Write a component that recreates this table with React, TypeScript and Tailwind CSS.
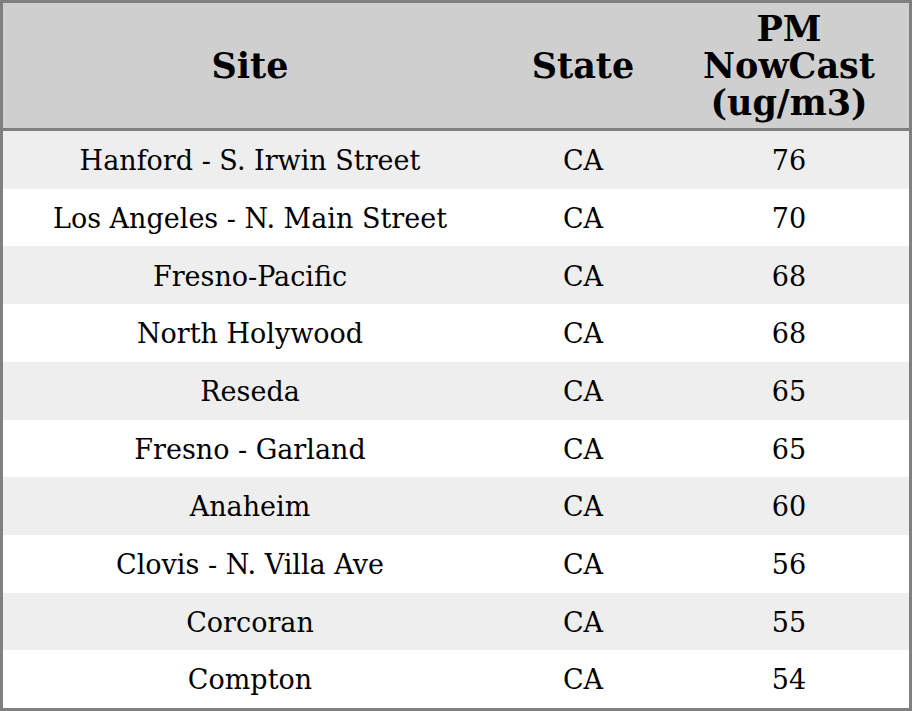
import React from 'react';

const rows = [
  ['Hanford - S. Irwin Street', 'CA', '76'],
  ['Los Angeles - N. Main Street', 'CA', '70'],
  ['Fresno-Pacific', 'CA', '68'],
  ['North Holywood', 'CA', '68'],
  ['Reseda', 'CA', '65'],
  ['Fresno - Garland', 'CA', '65'],
  ['Anaheim', 'CA', '60'],
  ['Clovis - N. Villa Ave', 'CA', '56'],
  ['Corcoran', 'CA', '55'],
  ['Compton', 'CA', '54'],
];

const App = () => {
  return (
    <div className="w-[912px] h-[711px] border-[3px] border-[#808080] flex flex-col text-black font-['DejaVu_Serif',serif]">
      <div className="h-[128px] shrink-0 grid grid-cols-[494px_172px_240px] items-center bg-[#cfcfcf] border-b-[3px] border-[#808080] text-[35px] font-bold leading-[37px] text-center">
        <div>Site</div>
        <div>State</div>
        <div>
          PM
          <br />
          NowCast
          <br />
          (ug/m3)
        </div>
      </div>
      {rows.map((r, i) => (
        <div
          key={i}
          className={`flex-1 grid grid-cols-[494px_172px_240px] items-center text-center text-[27px] pt-[3px] ${
            i % 2 === 0 ? 'bg-[#eeeeee]' : 'bg-white'
          }`}
        >
          <div>{r[0]}</div>
          <div>{r[1]}</div>
          <div>{r[2]}</div>
        </div>
      ))}
    </div>
  );
};

export default App;
